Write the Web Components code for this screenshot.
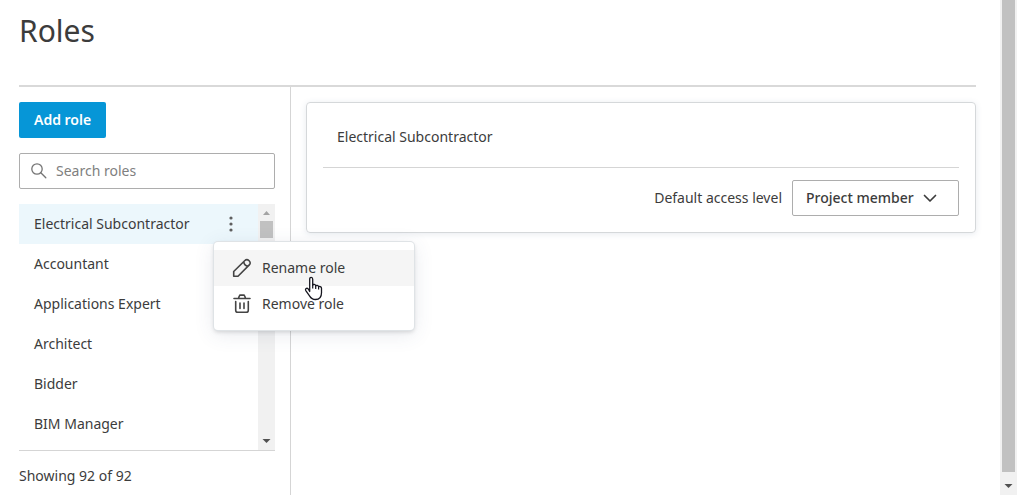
<!DOCTYPE html>
<html lang="en">
<head>
<meta charset="utf-8">
<meta name="viewport" content="width=device-width, initial-scale=1">
<title>Roles</title>
<style>
html, body { margin: 0; height: 100%; overflow: hidden; }
body { font: 14px/20px "Noto Sans", "Open Sans", sans-serif; color: #3c3c3c; background: #fff; }
</style>
</head>
<body>
<roles-page></roles-page>
<script>
const define = (name, html, setup) => {
  const template = document.createElement('template');
  template.innerHTML = html;
  customElements.define(name, class extends HTMLElement {
    constructor() {
      super();
      this.attachShadow({ mode: 'open' }).append(template.content.cloneNode(true));
    }
    connectedCallback() { if (setup) setup(this, this.shadowRoot); }
  });
};

define('scroll-track', `
<style>
:host { display: flex; flex-direction: column; box-sizing: border-box; width: 17px; flex: none; background: #f1f1f1; }
svg { display: block; flex: none; width: 17px; height: 17px; fill: #505050; }
:host([at-top]) .up { fill: #a3a3a3; }
:host([scrolled]) .up { display: none; }
.thumb { flex: none; height: 17px; margin: 0 2px; background: #c1c1c1; }
:host([scrolled]) .thumb { flex: 1; }
.rest { flex: 1; }
:host([scrolled]) .rest { flex: none; height: 6px; }
</style>
<svg class="up" viewBox="0 0 17 17" aria-hidden="true"><path d="M5 11h7L8.500 7z"/></svg>
<div class="thumb"></div>
<div class="rest"></div>
<svg viewBox="0 0 17 17" aria-hidden="true"><path d="M4.500 6h8L8.500 10z"/></svg>`);

define('primary-button', `
<style>
:host { display: block; }
button { font: inherit; font-weight: 600; height: 36px; padding: 0 15px; border: 0; border-radius: 2px; background: #0696d7; color: #fff; cursor: pointer; }
</style>
<button type="button"><slot></slot></button>`);

define('search-field', `
<style>
:host { display: block; }
label { display: flex; align-items: center; gap: 8px; box-sizing: border-box; height: 36px; padding: 0 10px; border: 1px solid #adadad; border-radius: 2px; }
svg { width: 18px; height: 18px; flex: none; fill: none; stroke: #757575; stroke-width: 1.300; stroke-linecap: round; }
input { flex: 1; min-width: 0; font: inherit; color: inherit; border: 0; padding: 0; outline: 0; background: none; }
input::placeholder { color: #808080; opacity: 1; }
</style>
<label>
<svg viewBox="0 0 18 18" aria-hidden="true"><circle cx="7" cy="7" r="5.200"/><path d="M10.800 10.800l5 5"/></svg>
<input type="search" aria-label="Search roles" placeholder="Search roles">
</label>`);

define('role-row', `
<style>
:host { display: flex; align-items: center; height: 40px; padding: 0 16px 0 15px; }
:host([selected]) { background: #ecf7fc; }
a { flex: 1; color: inherit; text-decoration: none; }
button { display: none; width: 22px; height: 24px; border: 0; padding: 0; background: none; }
:host([selected]) button { display: block; }
svg { display: block; width: 22px; height: 24px; fill: #5f5f5f; }
</style>
<a href="#role"><slot></slot></a>
<button type="button" aria-label="Role actions"><svg viewBox="0 0 22 24"><circle cx="11" cy="6" r="1.600"/><circle cx="11" cy="12" r="1.600"/><circle cx="11" cy="18" r="1.600"/></svg></button>`);

define('menu-item', `
<style>
:host { display: block; }
button { display: flex; align-items: center; gap: 10px; width: 100%; height: 36px; padding: 0 18px; border: 0; background: none; font: inherit; color: inherit; text-align: left; }
:host([active]) button { background: #f5f5f5; }
::slotted(svg) { width: 20px; height: 20px; flex: none; fill: none; stroke: #444; stroke-width: 1.600; stroke-linejoin: round; stroke-linecap: round; }
</style>
<button type="button" role="menuitem"><slot name="icon"></slot><span><slot></slot></span></button>`);

define('role-menu', `
<style>
:host { display: block; box-sizing: border-box; width: 200px; padding: 8px 0; background: #fff; border-radius: 4px; box-shadow: 0 0 0 1px #dfe3e6, 0 2px 4px #00000026, 0 4px 20px #3c507820; }
.pointer { position: absolute; left: 89px; top: 34px; width: 20px; height: 25px; pointer-events: none; }
</style>
<div role="menu">
<menu-item active>
<svg slot="icon" viewBox="0 0 20 20" aria-hidden="true"><path d="M1.700 18.200v-4.700L12.900 2.500c1.200-1.200 2.700-1.200 3.900 0l.5.500c1.200 1.200 1.200 2.700 0 3.900L6 18.200z M11.800 3.800c.3 2.700 1.700 4 4.200 4.300"/></svg>Rename role</menu-item>
<menu-item>
<svg slot="icon" viewBox="0 0 20 20" aria-hidden="true"><path d="M2 4.500h16M6.500 4.200l.8-2.200c.2-.6.600-.9 1.200-.9h3c.6 0 1 .3 1.200.9l.8 2.200M3.700 7.500v8.700c0 1.400.8 2.100 2.100 2.100h8.400c1.300 0 2.100-.7 2.100-2.100V7.500M8 9v5.500M12 9v5.500"/></svg>Remove role</menu-item>
</div>
<svg class="pointer" viewBox="0 0 20 25" aria-hidden="true"><path d="M6.700 15.500V3.200c0-2.500 3-2.500 3 0v6.200c.4-1.500 2.900-1.200 3 .7.500-1.200 2.800-.9 2.900.9.700-1 2.900-.6 2.900 1.300v4.500c0 4.200-2.300 6.700-6 6.700-3 0-4.500-1.200-5.800-3.400l-3.900-5.500c-1-1.700.9-3.100 2.300-1.900z" fill="#fff" stroke="#16161f" stroke-width="1.300" stroke-linejoin="round"/><path d="M9.700 8.500v4M12.700 9.500v3.500M15.600 10.500v3" fill="none" stroke="#16161f" stroke-width="1.200"/></svg>`);

define('role-sidebar', `
<style>
:host { display: flex; flex-direction: column; gap: 15px; box-sizing: border-box; width: 272px; flex: none; padding: 15px 15px 0 0; border-right: 1px solid #d5d5d5; position: relative; z-index: 1; }
.list { display: flex; flex: 1; min-height: 0; position: relative; border-bottom: 1px solid #d5d5d5; }
nav { flex: 1; overflow: hidden; }
role-menu { position: absolute; left: 195px; top: 38px; }
footer { padding: 0 0 9px; }
</style>
<primary-button>Add role</primary-button>
<search-field></search-field>
<div class="list">
<nav aria-label="Roles">
<role-row selected>Electrical Subcontractor</role-row>
<role-row>Accountant</role-row>
<role-row>Applications Expert</role-row>
<role-row>Architect</role-row>
<role-row>Bidder</role-row>
<role-row>BIM Manager</role-row>
</nav>
<scroll-track at-top></scroll-track>
<role-menu></role-menu>
</div>
<footer>Showing 92 of 92</footer>`);

define('access-select', `
<style>
:host { display: flex; align-items: center; justify-content: flex-end; gap: 10px; }
.box { display: grid; align-items: center; width: 167px; }
select, svg { grid-area: 1 / 1; }
select { appearance: none; width: 100%; height: 36px; box-sizing: border-box; padding: 0 13px; margin: 0; font: inherit; font-weight: 500; color: inherit; background: #fff; border: 1px solid #adadad; border-radius: 2px; }
svg { width: 14px; height: 14px; justify-self: end; margin-right: 22px; pointer-events: none; fill: none; stroke: #3c3c3c; stroke-width: 1.700; stroke-linecap: round; stroke-linejoin: round; }
</style>
<label for="level">Default access level</label>
<div class="box"><select id="level"><option>Project member</option><option>Project admin</option></select>
<svg viewBox="0 0 14 14" aria-hidden="true"><path d="M1.500 4.500L7 10l5.500-5.500"/></svg></div>`);

define('role-card', `
<style>
:host { display: block; padding: 0 16px 16px; border: 1px solid #d5d8da; border-radius: 4px; box-shadow: 0 1px 6px #3c50781f; }
h2 { margin: 0 0 12px; padding: 24px 14px 20px; font: inherit; border-bottom: 1px solid #d5d5d5; }
</style>
<h2><slot></slot></h2>
<access-select></access-select>`);

define('roles-page', `
<style>
:host { display: flex; height: 100%; }
.page { flex: 1; min-width: 0; display: flex; flex-direction: column; padding: 0 24px 0 19px; }
h1 { margin: 0; padding: 13px 0 36px; font-size: 30px; line-height: 36px; font-weight: 400; border-bottom: 2px solid #d9d9d9; }
.body { flex: 1; display: flex; min-height: 0; }
main { flex: 1; min-width: 0; padding: 15px 0 0 15px; }
</style>
<div class="page">
<h1>Roles</h1>
<div class="body">
<role-sidebar></role-sidebar>
<main><role-card>Electrical Subcontractor</role-card></main>
</div>
</div>
<scroll-track scrolled></scroll-track>`);
</script>
</body>
</html>
